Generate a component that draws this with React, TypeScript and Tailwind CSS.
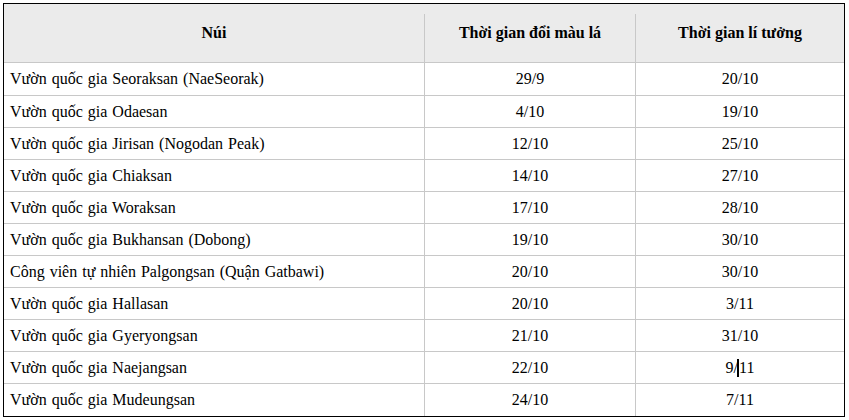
const rows: [string, string, string][] = [
  ['Vườn quốc gia Seoraksan (NaeSeorak)', '29/9', '20/10'],
  ['Vườn quốc gia Odaesan', '4/10', '19/10'],
  ['Vườn quốc gia Jirisan (Nogodan Peak)', '12/10', '25/10'],
  ['Vườn quốc gia Chiaksan', '14/10', '27/10'],
  ['Vườn quốc gia Woraksan', '17/10', '28/10'],
  ['Vườn quốc gia Bukhansan (Dobong)', '19/10', '30/10'],
  ['Công viên tự nhiên Palgongsan (Quận Gatbawi)', '20/10', '30/10'],
  ['Vườn quốc gia Hallasan', '20/10', '3/11'],
  ['Vườn quốc gia Gyeryongsan', '21/10', '31/10'],
  ['Vườn quốc gia Naejangsan', '22/10', '9/11'],
  ['Vườn quốc gia Mudeungsan', '24/10', '7/11'],
]

function Ideal({ value }: { value: string }) {
  // text cursor sits inside "9/11" in the screenshot
  if (value !== '9/11') return <>{value}</>
  return (
    <>
      9/<span className="inline-block w-[2px] h-[18px] bg-black align-[-4px] -ml-[1px]" />11
    </>
  )
}

export default function App() {
  return (
    <div className="w-[849px] h-[420px] bg-white pt-[3px] pl-[3px] text-black" style={{ fontFamily: '"Liberation Serif", "Times New Roman", serif' }}>
      <div className="w-[842px] border border-black">
        <div className="bg-[#ebebeb] h-[59px] border-b border-[#c8c8c8] grid grid-cols-[420px_211px_1fr] pt-[10px] text-[16px] font-bold">
          <div className="flex items-center justify-center pb-[11px]">Núi</div>
          <div className="flex items-center justify-center pb-[11px] border-l border-[#c8c8c8]">Thời gian đổi màu lá</div>
          <div className="flex items-center justify-center pb-[11px] border-l border-[#c8c8c8]">Thời gian lí tưởng</div>
        </div>
        {rows.map(([name, change, ideal], i) => (
          <div
            key={i}
            className={`grid grid-cols-[420px_211px_1fr] text-[16px] ${i === 0 ? 'h-[33px]' : 'h-[32px]'} ${i < rows.length - 1 ? 'border-b border-[#c8c8c8]' : ''}`}
          >
            <div className="flex items-center pl-[6px] [word-spacing:1px]">{name}</div>
            <div className="flex items-center justify-center border-l border-[#c8c8c8]">{change}</div>
            <div className="flex items-center justify-center border-l border-[#c8c8c8]">
              <Ideal value={ideal} />
            </div>
          </div>
        ))}
      </div>
    </div>
  )
}
